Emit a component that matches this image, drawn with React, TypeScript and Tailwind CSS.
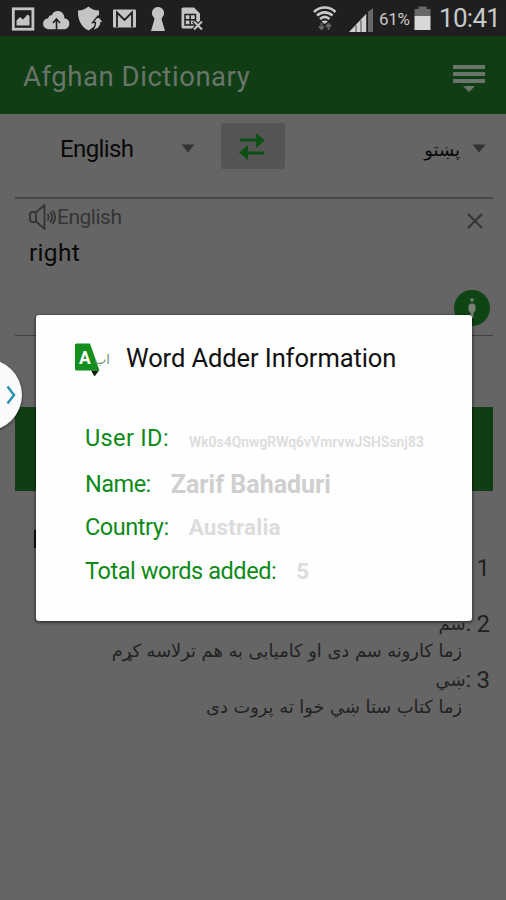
import type { ReactNode } from "react";

function StatusBar() {
  return (
    <div className="flex h-9 shrink-0 items-center bg-[#1f1f1f] text-[#c8c8c8]">
      <svg width="210" height="36" viewBox="0 0 210 36" className="shrink-0" fill="#c4c4c4">
        {/* gallery */}
        <rect x="13.3" y="8.8" width="19.6" height="20.4" fill="none" stroke="#c4c4c4" strokeWidth="2.8" />
        <path d="M16.500 25.500v-5l3.500-3.500 3 2.500 4.500-5 2 1.500v9.500z" />
        {/* cloud upload */}
        <path d="M49.500 29a5.500 5.500 0 0 1-.5-11c.2-2 1.500-3.500 3.500-3a6.300 6.300 0 0 1 11.500-1c1 1.500 1 2 1 4 3 .3 5 2 5 5.300s-2 5.700-5 5.700z" transform="translate(-.7 .3)" />
        <path d="M56.500 29.500v-10m-3.500 3.500l3.500-4 3.500 4" fill="none" stroke="#1f1f1f" strokeWidth="1.600" />
        {/* shield */}
        <path d="M78 10.500c4 0 7-1.500 10.500-4 3 2.500 6 4 10.500 4 .8 9-3 16-10.500 20C81 27 77.500 19.500 78 10.500z" />
        <path d="M98 16l6 6.500h-3c0 4.500-4 8-10 8 4-2 4.500-4.500 4.500-8h-3z" stroke="#1f1f1f" strokeWidth="1.300" />
        {/* mail */}
        <rect x="113" y="9.500" width="23" height="18" rx="1" />
        <path d="M117 27V12.500l7.500 7.500 7.500-7.500V27" fill="none" stroke="#1f1f1f" strokeWidth="1.800" />
        {/* keyhole figure */}
        <path d="M158 7a6 6 0 0 1 4.500 10l-1 2 3.500 12h-14l3.500-12-1-2a6 6 0 0 1 4.500-10z" />
        {/* sim card */}
        <path d="M183 7.500h11l6 6v15h-17a1.500 1.500 0 0 1-1.500-1.500v-18a1.500 1.500 0 0 1 1.500-1.500z" />
        <path d="M185 14.500h10.500v10.500H185zM185 19.700h10.500M190.200 14v11" fill="none" stroke="#1f1f1f" strokeWidth="1.500" />
        <path d="M193.500 21l9 9m0-9l-9 9" fill="none" stroke="#1f1f1f" strokeWidth="4" />
        <path d="M194 21.500l8 8m0-8l-8 8" fill="none" stroke="#c4c4c4" strokeWidth="2" />
      </svg>
      <svg width="68" height="36" viewBox="308 0 68 36" className="ml-[98px] shrink-0" fill="none">
        <path d="M314 12c6-6 15.500-6 21.500 0M317 15.500c4.500-4.200 11-4.200 15.500 0M320 19c3-2.700 6.500-2.700 9.500 0" stroke="#c8c8c8" strokeWidth="2.600" />
        <path d="M321.500 21.500c2-1.500 4.500-1.500 6.500 0l-3.300 2.500z" fill="#c8c8c8" />
        <path d="M321.500 23v6m-2.500-2.500l2.500 2.500 2.500-2.500M328.500 30v-6m-2.500 2.500l2.500-2.500 2.500 2.500" stroke="#666" strokeWidth="1.900" />
        <path d="M349 32h17V14z" fill="#d0d0d0" />
        <path d="M368 12l5-4v24h-5z" fill="#686868" />
        <path d="M356 25v7M361 20v12M366.500 14v18" stroke="#4a4a4a" strokeWidth="1" />
      </svg>
      <span className="ml-[3px] mt-[2px] w-[32px] whitespace-nowrap text-[17px] leading-9 tracking-[-0.350px]">61%</span>
      <svg width="18" height="36" viewBox="0 0 18 36" className="ml-[3px] shrink-0">
        <path d="M.5 9h4V6.500h8V9h4v7H.5z" fill="#686868" />
        <path d="M.5 16h16v14H.5z" fill="#d8d8d8" />
      </svg>
      <span className="ml-[7px] whitespace-nowrap text-[26px] leading-9 tracking-[-0.700px]">10:41</span>
    </div>
  );
}

function Caret() {
  return (
    <svg width="14" height="9" viewBox="0 0 14 9" className="-mt-[2px] shrink-0">
      <path d="M.5.5h13L7 8.500z" fill="#333" />
    </svg>
  );
}

function Toolbar() {
  return (
    <header className="flex h-[78px] shrink-0 items-center justify-between bg-[#113d14] pl-[23px] pr-[21px] text-[#69756a]">
      <h1 className="mt-[3px] whitespace-nowrap text-[27.500px] font-normal leading-8 tracking-[0.550px]">Afghan Dictionary</h1>
      <svg width="32" height="30" viewBox="0 0 32 30" className="mt-[8px]" fill="#69756a">
        <path d="M0 1h32v4H0zM0 8h32v4H0zM0 15h32v4H0zM10 22h12l-6 6z" />
      </svg>
    </header>
  );
}

function LanguageRow() {
  return (
    <section className="flex h-[85px] items-start border-b-2 border-[#464646] pt-[9px]">
      <div className="flex h-[52px] w-[206px] items-center pl-[45px]">
        <span className="w-[121px] text-[24px] tracking-[-0.600px] text-[#090909]">English</span>
        <Caret />
      </div>
      <div className="flex h-[46px] w-[64px] items-center justify-center rounded-[2px] bg-[#555]">
        <svg width="28" height="28" viewBox="0 0 28 28" className="-ml-[2px]" fill="#0e4f14">
          <path d="M2 6.500h16V1l9 7.500-9 7.500v-6.500H2zM26 19.500H10V13l-9 7.500L10 28v-5.500h16z" />
        </svg>
      </div>
      <div className="flex h-[52px] flex-1 items-center justify-end pr-[7px]">
        <span dir="rtl" className="mr-[12px] text-[18px] text-[#090909] font-['DejaVu_Sans',sans-serif]">پښتو</span>
        <Caret />
      </div>
    </section>
  );
}

function EntryBox() {
  return (
    <section className="flex h-[137px] flex-col border-b border-[#414141] pl-[14px]">
      <div className="flex h-[38px] items-center justify-between pr-[10px]">
        <div className="flex items-center text-[21px] text-[#353535]">
          <svg width="28" height="28" viewBox="0 0 28 28" className="-mt-[2px]" fill="none" stroke="#353535" strokeWidth="1.900" strokeLinejoin="round">
            <path d="M7 9H2.500L1 10.500v7L2.500 19H7zM7 9.500l8.500-7.500v24L7 18.500M18.500 11c1.500 2 1.500 4.500 0 6.500M21 9c3 3.500 3 7 0 10.500M23.500 7.500c3.500 4.500 3.500 9 0 13.500" />
          </svg>
          <span className="-mt-[2px] leading-7 tracking-[-0.500px]">English</span>
        </div>
        <svg width="16" height="16" viewBox="0 0 16 16" className="mt-[5px]" stroke="#363636" strokeWidth="2.200">
          <path d="M1 1l14 14M15 1L1 15" />
        </svg>
      </div>
      <span className="text-[24.500px] leading-8 tracking-[0.300px] text-[#090909]">right</span>
      <div className="mr-[3px] mt-[21px] flex h-9 w-9 items-center justify-center self-end rounded-full bg-[#0f4514]">
        <svg width="10" height="22" viewBox="0 0 10 22" fill="#777f76">
          <circle cx="5" cy="3" r="1.800" />
          <path d="M4 6.500h2q2.500.5 2.500 3v4L6.500 16v5h-3v-5l-2-2.500v-4q0-2.500 2.500-3z" />
        </svg>
      </div>
    </section>
  );
}

function Meaning({ number, word, example }: { number: number; word: string; example: string }) {
  return (
    <li className="flex h-14 flex-col items-end text-[#222]">
      <div dir="rtl" className="flex h-7 items-center">
        <span className="w-[19px] text-[24px] leading-7">{number}</span>
        {word && <span className="text-[22px] leading-7">:</span>}
        <span className="text-[18px] leading-7 font-['DejaVu_Sans',sans-serif]">{word}</span>
      </div>
      <span dir="rtl" className="mr-7 whitespace-nowrap text-[17.800px] leading-[25px] font-['DejaVu_Sans',sans-serif]">{example}</span>
    </li>
  );
}

function DialogRow({ label, className, children }: { label: string; className: string; children: ReactNode }) {
  return (
    <div className={"flex items-baseline whitespace-nowrap text-[23.500px] " + className}>
      <dt className="shrink-0 leading-8 text-[#0d8a17]">{label}</dt>
      <dd className="font-bold tracking-normal text-[#cfcfcf]">{children}</dd>
    </div>
  );
}

function AdderDialog() {
  return (
    <div role="dialog" className="absolute left-9 top-[315px] h-[306px] w-[435.500px] rounded-[3px] bg-[#fefefe] shadow-[0_1px_3px_1px_rgba(0,0,0,0.450)]">
      <div className="flex h-[86px] items-center pl-[38px]">
        <svg width="36" height="36" viewBox="0 0 36 36" className="shrink-0">
          <path d="M2.500 3.500h13.500l9.500 27H2.500A1.500 1.500 0 0 1 1 29V5a1.500 1.500 0 0 1 1.500-1.500z" fill="#148e1d" />
          <path d="M17 30.500h8l-4.500 6z" fill="#0b2109" />
          <text x="5" y="23.500" fontSize="17.500" fontWeight="700" fill="#fff" fontFamily="Roboto">A</text>
          <text x="20" y="24" fontSize="13" fill="#6c9070" fontFamily="DejaVu Sans">اب</text>
        </svg>
        <h2 className="ml-4 whitespace-nowrap text-[25.500px] font-normal leading-8 tracking-[-0.090px] text-[#111]">Word Adder Information</h2>
      </div>
      <dl className="flex flex-col pl-[49px] pt-[20px]">
        <DialogRow label="User ID:" className="h-[44px] tracking-[0.350px]">
          <span className="relative top-px ml-5 text-[13.900px] font-semibold tracking-[0.040px] text-[#dcdcdc]">Wk0s4QnwgRWq6vVmrvwJSHSsnj83</span>
        </DialogRow>
        <DialogRow label="Name:" className="h-[45px] tracking-[-0.500px]">
          <span className="relative top-px ml-5 text-[25px]">Zarif Bahaduri</span>
        </DialogRow>
        <DialogRow label="Country:" className="h-[44px] tracking-[-0.450px]">
          <span className="ml-5 text-[22.500px] tracking-[0.150px] text-[#dcdcdc]">Australia</span>
        </DialogRow>
        <DialogRow label="Total words added:" className="h-[44px] tracking-[-0.430px]">
          <span className="ml-5 text-[22.500px] text-[#dcdcdc]">5</span>
        </DialogRow>
      </dl>
    </div>
  );
}

export default function App() {
  return (
    <div className="relative flex h-[900px] w-[506px] flex-col overflow-hidden bg-[#656565] font-['Roboto',sans-serif]">
      <StatusBar />
      <Toolbar />
      <main className="flex flex-col pl-[15px] pr-[13px]">
        <LanguageRow />
        <EntryBox />
        <div className="mt-[71px] h-[84px] bg-[#113d14]" />
        <div className="ml-[19px] mt-[39px] h-[18px] w-1 bg-[#111]" />
        <ol className="mr-[3px] mt-[6px] flex flex-col">
          <Meaning number={1} word="" example="" />
          <Meaning number={2} word="سم" example="زما کارونه سم دی او کامیابی به هم ترلاسه کړم" />
          <Meaning number={3} word="ښي" example="زما کتاب ستا ښي خوا ته پروت دی" />
        </ol>
      </main>
      <AdderDialog />
      <div className="absolute -left-[50px] top-[359px] flex h-[72px] w-[72px] items-center justify-end rounded-full bg-[#fafafa] pr-[6px] shadow-[0_1px_3px_rgba(0,0,0,0.600)]">
        <svg width="10" height="20" viewBox="0 0 10 20" fill="none" stroke="#2f91b5" strokeWidth="2.500">
          <path d="M1.500 1.500L8 10l-6.500 8.500" />
        </svg>
      </div>
    </div>
  );
}
